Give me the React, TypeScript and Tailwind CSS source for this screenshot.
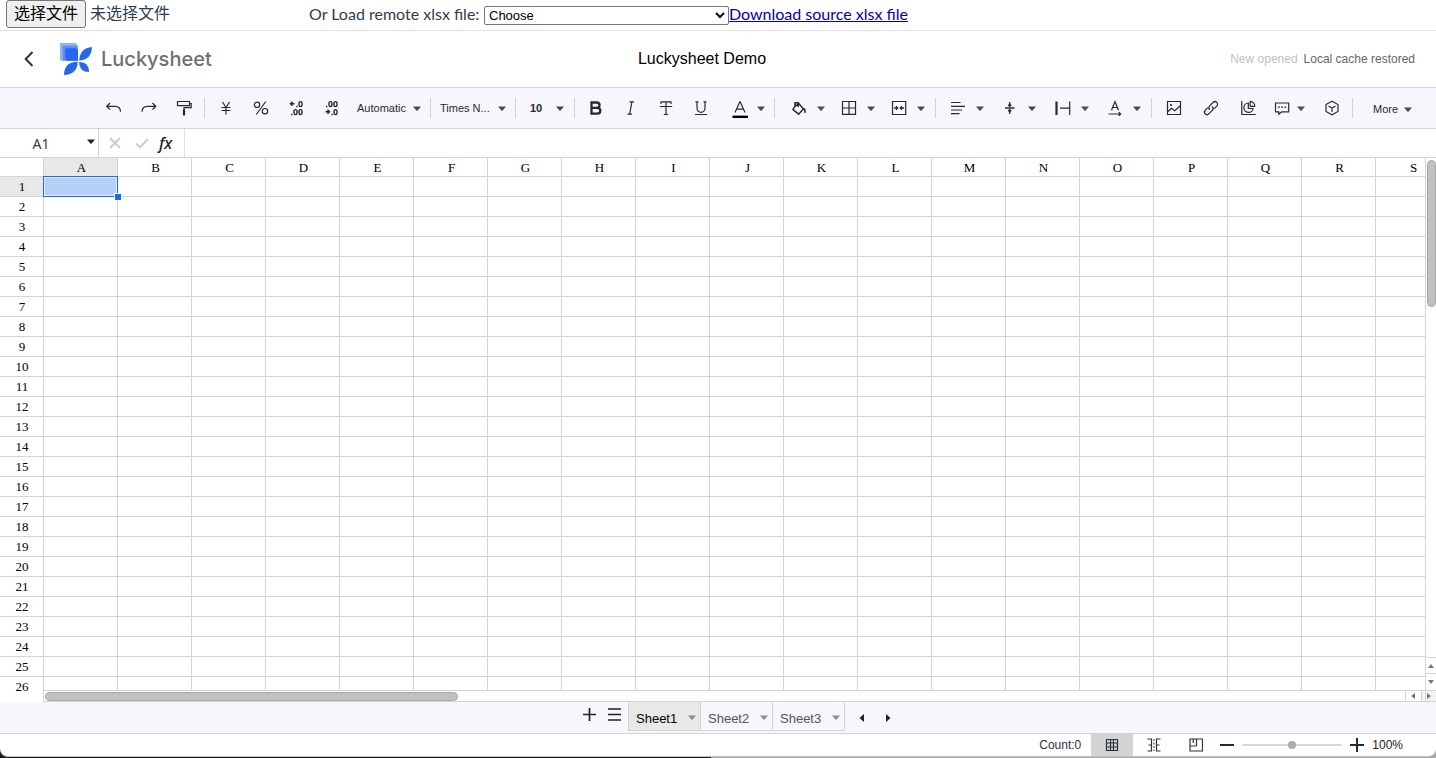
import React, { useState } from "react";

const COLUMNS = "ABCDEFGHIJKLMNOPQRS".split("");
const ROWS = Array.from({ length: 26 }, (_, i) => i + 1);

function Icon({ children }: { children: React.ReactNode }) {
  return (
    <svg
      viewBox="0 0 20 20"
      className="h-5 w-5 shrink-0"
      fill="none"
      stroke="currentColor"
      strokeWidth="1.2"
      aria-hidden="true"
    >
      {children}
    </svg>
  );
}

function Caret({ className = "" }: { className?: string }) {
  return (
    <svg viewBox="0 0 8 5" className={`h-[5px] w-2 shrink-0 ${className}`} fill="currentColor" aria-hidden="true">
      <path d="M0 .5h8L4.6 4.4a.8.8 0 0 1-1.2 0z" />
    </svg>
  );
}

function Tool({ label, className = "w-[35px]", children }: { label: string; className?: string; children: React.ReactNode }) {
  return (
    <button type="button" aria-label={label} className={`flex h-8 shrink-0 items-center justify-center ${className}`}>
      {children}
    </button>
  );
}

function MenuTool({ label, className = "w-[50px]", children }: { label: string; className?: string; children: React.ReactNode }) {
  return (
    <button type="button" aria-label={label} className={`flex h-8 shrink-0 items-center gap-2 pl-[11px] ${className}`}>
      <Icon>{children}</Icon>
      <Caret className="mt-px text-[#4a4a4f]" />
    </button>
  );
}

function Divider({ className = "mx-[3px]" }: { className?: string }) {
  return <span className={`h-5 w-px shrink-0 bg-[#d4d4d8] ${className}`} />;
}

function TopBar() {
  return (
    <div className="flex h-[31px] shrink-0 items-start border-b border-[#e0e0e0] pl-[6px] text-[16px] leading-7 text-[#2c3e50]">
      <div className="flex w-[303px] shrink-0 items-center gap-1">
        <label
          htmlFor="file"
          className="h-7 rounded-[3px] border border-[#767676] bg-[#efefef] px-[7px] leading-[26px] text-black"
        >
          选择文件
        </label>
        <input id="file" type="file" className="sr-only" />
        <span>未选择文件</span>
      </div>
      <label htmlFor="remote" className="w-[175px] shrink-0 font-[Lato,sans-serif] whitespace-nowrap">
        Or Load remote xlsx file:
      </label>
      <span className="relative mt-[6px] h-[19px] w-[245px] shrink-0">
        <select
          id="remote"
          className="block h-[19px] w-full appearance-none rounded-[2px] border border-[#767676] bg-white pl-1 text-[13px] leading-4 text-black"
        >
          <option>Choose</option>
        </select>
        <svg
          viewBox="0 0 10 7"
          className="pointer-events-none absolute top-[6px] right-1 h-[7px] w-[10px]"
          fill="none"
          stroke="#000"
          strokeWidth="2"
          aria-hidden="true"
        >
          <path d="M1 1l4 4 4-4" />
        </svg>
      </span>
      <a href="#download" className="shrink-0 font-[Lato,sans-serif] text-[#0000cc] underline">
        Download source xlsx file
      </a>
    </div>
  );
}

function Header() {
  return (
    <header className="grid h-[57px] shrink-0 grid-cols-[1fr_auto_1fr] items-center border-b border-[#d4d4d4] px-5">
      <div className="flex items-center">
        <button type="button" aria-label="Back" className="flex h-8 w-5 items-center justify-start pl-1 text-[#333]">
          <svg viewBox="0 0 10 16" className="h-4 w-[10px]" fill="none" stroke="currentColor" strokeWidth="2" aria-hidden="true">
            <path d="M8.500 1L1.700 8l6.800 7" />
          </svg>
        </button>
        <svg viewBox="0 0 32 32" className="ml-5 h-8 w-8" aria-hidden="true">
          <path d="M0 0h15.500l2 2v15.500H0z" fill="#8fb3f4" />
          <path d="M2.700 2.700h15v15h-15z" fill="#5c8df5" />
          <path d="M5.200 5.200H15q3 0 3 3v9.600H8.200q-3 0-3-3z" fill="#2468f2" />
          <path d="M32 4q-.2 6.400-3.600 9.900-3.300 3.300-9.200 3.700.2-5.900 3.300-9.400Q25.600 4.500 32 4z" fill="#2468f2" />
          <path d="M4 32q0-6.300 3.300-9.700 3.300-3.400 10.300-3.600 0 6.200-3.300 9.600Q10.800 31.800 4 32z" fill="#2468f2" />
          <path d="M29 29q-4.900 0-7.400-2.500-2.400-2.500-2.600-7.500 5.200.1 7.600 2.500Q29 24 29 29z" fill="#2468f2" />
        </svg>
        <span className="ml-[9px] font-[Inter,sans-serif] text-[20px] font-medium text-[#6b7078]">Luckysheet</span>
      </div>
      <h1 className="mr-8 text-[16px] text-black">Luckysheet Demo</h1>
      <div className="flex justify-end gap-[6px] pr-px text-[12px]">
        <span className="text-[#bfbfbf]">New opened</span>
        <span className="text-[#666]">Local cache restored</span>
      </div>
    </header>
  );
}

function Toolbar() {
  return (
    <div
      role="toolbar"
      className="flex h-[41px] shrink-0 items-center overflow-hidden border-b border-[#d4d4d4] bg-[#f6f6fc] pl-24 text-[11px] text-[#262a33]"
    >
      <Tool label="Undo">
        <Icon>
          <path d="M6 5L2.700 8.300 6 11.500M2.700 8.300H11c3.500 0 5.500 2 5.500 5.500" />
        </Icon>
      </Tool>
      <Tool label="Redo">
        <Icon>
          <path d="M13.500 5l3.300 3.300-3.300 3.200M16.800 8.300H8.500C5 8.300 3 10.300 3 13.800" />
        </Icon>
      </Tool>
      <Tool label="Paint format">
        <Icon>
          <path d="M3.500 3.500h12v4.200h-12zM15.500 5.500h1.700v4.200H10v3.700" />
          <path d="M10 11.500v6" strokeWidth="2.200" />
        </Icon>
      </Tool>
      <Divider />
      <Tool label="Currency format">
        <Icon>
          <path d="M6.500 4l3.500 5.500L13.500 4M10 9.500v7M5.500 9.500h9M5.500 12.500h9" />
        </Icon>
      </Tool>
      <Tool label="Percentage format">
        <Icon>
          <circle cx="6" cy="6.800" r="2.700" />
          <circle cx="14" cy="13.200" r="2.700" />
          <path d="M14.800 3.500L5.300 16.500" />
        </Icon>
      </Tool>
      <Tool label="Decrease decimals">
        <Icon>
          <path d="M4.500 5.800h4M6.500 3.800l-2 2 2 2" strokeWidth="1.400" />
          <rect x="13" y="3.600" width="3" height="5" rx="1.500" strokeWidth="1.400" />
          <rect x="8" y="11.600" width="3" height="5" rx="1.500" strokeWidth="1.400" />
          <rect x="13" y="11.600" width="3" height="5" rx="1.500" strokeWidth="1.400" />
          <path d="M10.300 8.500h1.400M5 16.500h1.400" strokeWidth="1.500" />
        </Icon>
      </Tool>
      <Tool label="Increase decimals">
        <Icon>
          <path d="M4.500 13.800h4M6.500 11.800l2 2-2 2" strokeWidth="1.400" />
          <rect x="13" y="11.600" width="3" height="5" rx="1.500" strokeWidth="1.400" />
          <rect x="8" y="3.600" width="3" height="5" rx="1.500" strokeWidth="1.400" />
          <rect x="13" y="3.600" width="3" height="5" rx="1.500" strokeWidth="1.400" />
          <path d="M10.300 16.500h1.400M5 8.500h1.400" strokeWidth="1.500" />
        </Icon>
      </Tool>
      <button type="button" className="flex h-8 w-[79px] shrink-0 items-center justify-between pr-[6px] pl-[9px]">
        Automatic
        <Caret className="mt-px text-[#4a4a4f]" />
      </button>
      <Divider />
      <button type="button" className="flex h-8 w-[78px] shrink-0 items-center justify-between pr-[6px] pl-[6px]">
        Times N...
        <Caret className="mt-px text-[#4a4a4f]" />
      </button>
      <Divider />
      <button type="button" className="flex h-8 w-[52px] shrink-0 items-center justify-between pr-[7px] pl-[11px] font-bold">
        10
        <Caret className="mt-px text-[#4a4a4f]" />
      </button>
      <Divider />
      <Tool label="Bold">
        <Icon>
          <path d="M5.500 4.500h5.300a2.700 2.700 0 0 1 0 5.400H5.500zM5.500 9.900h5.900a2.900 2.900 0 0 1 0 5.800H5.500z" strokeWidth="2.300" />
        </Icon>
      </Tool>
      <Tool label="Italic">
        <Icon>
          <path d="M8.500 3.800h4.500M6.500 16.200H11M10.900 3.800L8.700 16.200" />
        </Icon>
      </Tool>
      <Tool label="Strikethrough">
        <Icon>
          <path d="M5 6V3.800h10V6M10 3.800v12.700M7.800 16.500h4.400M3.800 8.500h12.400" />
        </Icon>
      </Tool>
      <Tool label="Underline">
        <Icon>
          <path d="M4.500 3.800h3M12.500 3.800h3M6 3.800v6.500a4 4 0 0 0 8 0V3.800M4 16.500h12" />
        </Icon>
      </Tool>
      <MenuTool label="Text color" className="w-[53px]">
        <path d="M6 14.500L10.800 3.800h.4L16 14.500M7.500 11.200h7" />
        <path d="M3.500 18.800H19" stroke="#000" strokeWidth="2.400" />
      </MenuTool>
      <Divider />
      <MenuTool label="Cell color">
        <path d="M5.600 8.700L9.800 5.500l4.600 5.500-4.800 5.200L4 11.600zM6 8.500V4.700h3.200V9" strokeWidth="1.500" />
        <path d="M14.600 10.500q2 1 1.300 4.300" strokeWidth="1.500" />
        <path d="M2.500 19.300h15" stroke="#fff" strokeWidth="1.400" />
      </MenuTool>
      <MenuTool label="Border">
        <path d="M3.500 3.500h13v12.800h-13zM10 3.500v12.800M3.500 10h13" />
      </MenuTool>
      <MenuTool label="Merge cells">
        <path d="M3.500 3.500h13.200v13H3.500z" />
        <path d="M5 10h3.500M15 10h-3.500M7 8.300L8.700 10 7 11.700M13 8.300L11.300 10l1.700 1.700" strokeWidth="1.300" />
      </MenuTool>
      <Divider className="mr-px ml-[7px]" />
      <MenuTool label="Horizontal align" className="w-[52px]">
        <path d="M3 4.500h9.500M3 8.300h14M3 12h11M3 15.700h8.500" />
      </MenuTool>
      <MenuTool label="Vertical align" className="w-[53px]">
        <path d="M5 10h9.500M9.700 4v4.500M8.200 6.800l1.500 1.500 1.500-1.500M9.700 16v-4.500M8.200 13.200l1.500-1.500 1.500 1.500" strokeWidth="1.400" />
      </MenuTool>
      <MenuTool label="Text wrap" className="w-[52px]">
        <path d="M3.500 3.500v13.500" strokeWidth="2.200" />
        <path d="M16.700 3.500v13.500M7 10.200h9.500" />
      </MenuTool>
      <MenuTool label="Text rotate" className="w-[52px]">
        <path d="M6.500 12.300L10 3.500l3.500 8.800M7.700 9.500h4.700M3.500 16h12M13.700 14.200l2 1.800-2 1.800" />
      </MenuTool>
      <Divider className="mr-[3px] ml-[5px]" />
      <Tool label="Insert image" className="w-[37px]">
        <Icon>
          <path d="M3.500 3.500h13v13h-13zM4 13.500l3.500-3.200 3.300 2.500 5.500-5" />
          <circle cx="7" cy="7" r=".5" />
        </Icon>
      </Tool>
      <Tool label="Insert link" className="w-[37px]">
        <Icon>
          <path d="M8.800 11.900a3 3 0 0 1-.1-4.100l3.300-3.300a2.500 2.500 0 0 1 3.900 3.300l-2.600 2.800M11.200 8.300a3 3 0 0 1 .1 4.100L8 15.700a2.500 2.500 0 0 1-3.900-3.300l2.600-2.800" />
        </Icon>
      </Tool>
      <Tool label="Insert chart" className="w-[37px]">
        <Icon>
          <path d="M3.800 3v13.500h14" />
          <path d="M10.300 5a4.700 4.700 0 1 0 4.900 5.500h-4.900zM12.200 3.400a4.600 4.600 0 0 1 4.500 4.900h-4.500z" />
        </Icon>
      </Tool>
      <button type="button" aria-label="Comment" className="flex h-8 w-12 shrink-0 items-center gap-[5px] pl-[6px]">
        <Icon>
          <path d="M3.500 5h13.200v8.800h-7l-2.900 2.500v-2.500H3.500z" />
          <path d="M6 9.200h1.800M9.200 9.200H11M12.400 9.200h1.800" />
        </Icon>
        <Caret className="mt-px text-[#4a4a4f]" />
      </button>
      <Tool label="Pivot table">
        <Icon>
          <path d="M10 3.200l6 3.400v6.800l-6 3.400-6-3.400V6.600zM6.500 8l3.500 2 3.500-2M10 10v4" />
        </Icon>
      </Tool>
      <Divider />
      <button type="button" className="flex h-8 shrink-0 items-center gap-[6px] pt-[2px] pl-[17px]">
        More
        <Caret className="text-[#4a4a4f]" />
      </button>
    </div>
  );
}

function FormulaBar() {
  return (
    <div className="flex h-[29px] shrink-0 items-stretch border-b border-[#d4d4d4]">
      <div className="flex w-[99px] items-center border-r border-[#d4d4d4] pr-[3px]">
        <input
          aria-label="Name box"
          defaultValue="A1"
          className="w-[82px] min-w-0 bg-transparent text-center font-['Noto_Sans',sans-serif] text-[14px] text-[#2c3e50] outline-none"
        />
        <Caret className="mb-[3px] ml-auto text-[#222]" />
      </div>
      <div className="flex w-[86px] shrink-0 items-center border-r border-[#e0e0e0] pl-[10px]">
        <button type="button" aria-label="Cancel" className="w-[26px] text-[#cccccc]">
          <svg viewBox="0 0 12 12" className="h-3 w-3" fill="none" stroke="currentColor" strokeWidth="2" aria-hidden="true">
            <path d="M1 1l10 10M11 1L1 11" />
          </svg>
        </button>
        <button type="button" aria-label="Confirm" className="w-[24px] text-[#cccccc]">
          <svg viewBox="0 0 14 12" className="h-3 w-[14px]" fill="none" stroke="currentColor" strokeWidth="2" aria-hidden="true">
            <path d="M1 6.500L5 10.300 13 2" />
          </svg>
        </button>
        <button type="button" className="font-['Noto_Sans',sans-serif] text-[16px] font-medium text-[#222] italic">
          fx
        </button>
      </div>
      <input aria-label="Formula" className="min-w-0 flex-1 px-2 text-[13px] outline-none" />
    </div>
  );
}

function Grid() {
  return (
    <div className="flex min-h-0 flex-1">
      <div className="relative min-w-0 flex-1 overflow-hidden border-r border-[#d4d4d4]">
        <table className="w-max table-fixed border-separate border-spacing-0 font-['Liberation_Serif',serif] text-[13px] leading-[19px] text-black">
          <thead>
            <tr className="h-[19px]">
              <td className="h-[19px] w-11 min-w-11 border-r border-b border-[#d4d4d4] p-0" />
              {COLUMNS.map((c) => (
                <th
                  key={c}
                  scope="col"
                  className={`h-[19px] w-[74px] min-w-[74px] border-r border-b border-[#d4d4d4] p-0 pt-px pl-[2px] leading-[17px] font-normal ${
                    c === "A" ? "bg-[#e8e8e8]" : ""
                  }`}
                >
                  {c}
                </th>
              ))}
            </tr>
          </thead>
          <tbody>
            {ROWS.map((r) => (
              <tr key={r} className="h-5">
                <th
                  scope="row"
                  className={`h-5 border-r border-b border-r-[#d4d4d4] p-0 pl-px font-normal ${r === 1 ? "bg-[#e8e8e8]" : ""} ${
                    r === ROWS.length ? "border-b-transparent" : "border-b-[#d4d4d4]"
                  }`}
                >
                  {r}
                </th>
                {COLUMNS.map((c) => (
                  <td key={c} className="h-5 border-r border-b border-[#d4d4d4] p-0">
                    {r === 1 && c === "A" && (
                      <div className="relative h-[19px]">
                        <span className="absolute -top-px -right-px -bottom-px -left-px z-10 border border-[#0f6fec] bg-[#b5cff5] shadow-[inset_0_0_0_1px_#e4eefc]">
                          <span className="absolute -right-1 -bottom-1 h-[6px] w-[6px] bg-[#0f6fec] shadow-[0_0_0_1px_#fff]" />
                        </span>
                      </div>
                    )}
                  </td>
                ))}
              </tr>
            ))}
          </tbody>
        </table>
        <div className="absolute right-0 bottom-0 left-[43px] z-20 flex h-3 items-stretch border-t border-b border-l border-[#d4d4d4] bg-white">
          <div className="flex-1 pt-px pl-px">
            <div className="h-[9px] w-[30.4%] rounded-full border border-[#a8a8a8] bg-[#c1c1c1]" />
          </div>
          <button type="button" aria-label="Scroll left" className="flex w-4 items-center justify-center border-l border-[#d4d4d4] pr-px text-[#777]">
            <svg viewBox="0 0 4 6" className="h-[6px] w-1" fill="currentColor" aria-hidden="true">
              <path d="M4 0v6L0 3z" />
            </svg>
          </button>
          <span className="w-1 border-l border-[#d4d4d4] bg-[#f3f3f3]" />
        </div>
      </div>
      <div className="flex w-[10px] shrink-0 flex-col">
        <div className="flex-1 pt-[2px] pl-px">
          <div className="h-[147px] w-[9px] rounded-full border border-[#a8a8a8] bg-[#c1c1c1]" />
        </div>
        <button type="button" aria-label="Scroll up" className="flex h-4 items-center justify-center border-t border-[#d4d4d4] text-[#777]">
          <svg viewBox="0 0 6 4" className="h-1 w-[6px]" fill="currentColor" aria-hidden="true">
            <path d="M0 4h6L3 0z" />
          </svg>
        </button>
        <button type="button" aria-label="Scroll down" className="flex h-[17px] items-center justify-center border-t border-[#d4d4d4] text-[#777]">
          <svg viewBox="0 0 6 4" className="h-1 w-[6px]" fill="currentColor" aria-hidden="true">
            <path d="M0 0h6L3 4z" />
          </svg>
        </button>
        <button type="button" aria-label="Scroll right" className="flex h-3 items-center justify-start border-t border-b border-[#d4d4d4] bg-[#f3f3f3] pl-px text-[#777]">
          <svg viewBox="0 0 4 6" className="h-[6px] w-1" fill="currentColor" aria-hidden="true">
            <path d="M0 0v6l4-3z" />
          </svg>
        </button>
      </div>
    </div>
  );
}

function SheetTabs() {
  const [active, setActive] = useState("Sheet1");
  return (
    <div className="flex h-8 shrink-0 items-start border-b border-[#d4d4d4] bg-[#f6f6fc] pl-[577px] text-[#222]">
      <button type="button" aria-label="Add sheet" className="flex h-[25px] w-[25px] items-center justify-center">
        <svg viewBox="0 0 13 13" className="h-[13px] w-[13px]" fill="none" stroke="currentColor" strokeWidth="1.700" aria-hidden="true">
          <path d="M6.500 0v13M0 6.500h13" />
        </svg>
      </button>
      <button type="button" aria-label="Sheet list" className="flex h-[25px] w-[26px] items-center pl-[6px]">
        <svg viewBox="0 0 13 13" className="h-[13px] w-[13px]" fill="none" stroke="currentColor" strokeWidth="1.600" aria-hidden="true">
          <path d="M0 1h13M0 6.500h13M0 12h13" />
        </svg>
      </button>
      <div className="flex h-[29px] border-l border-[#d4d4d4]">
        {["Sheet1", "Sheet2", "Sheet3"].map((name) => (
          <button
            key={name}
            type="button"
            onClick={() => setActive(name)}
            className={`flex w-[72px] items-center justify-between border-r border-b border-[#d4d4d4] pt-[5px] pr-1 pl-[7px] text-[13px] ${
              active === name ? "bg-[#e8e8e8] text-black" : "text-[#555]"
            }`}
          >
            {name}
            <Caret className="mb-[2px] text-[#8e8e8e]" />
          </button>
        ))}
      </div>
      <button type="button" aria-label="Previous sheets" className="ml-[3px] flex h-[31px] w-[26px] items-center justify-center">
        <svg viewBox="0 0 5 8" className="h-2 w-[5px]" fill="currentColor" aria-hidden="true">
          <path d="M5 0v8L.5 4z" />
        </svg>
      </button>
      <button type="button" aria-label="Next sheets" className="flex h-[31px] w-[28px] items-center justify-center">
        <svg viewBox="0 0 5 8" className="h-2 w-[5px]" fill="currentColor" aria-hidden="true">
          <path d="M0 0v8l4.500-4z" />
        </svg>
      </button>
    </div>
  );
}

function StatusBar() {
  return (
    <footer className="flex h-[22px] shrink-0 items-center justify-end pr-[33px] text-[12px] text-[#2c3340]">
      <span className="mr-[10px]">Count:0</span>
      <button type="button" aria-label="Normal view" className="flex h-full w-[42px] items-center justify-center bg-[#d3d3d3]">
        <svg viewBox="0 0 14 14" className="h-[14px] w-[14px]" fill="none" stroke="currentColor" aria-hidden="true">
          <path d="M1 1.500h12M1 5h12M1 9h12M1 12.500h12M1.500 1v12M5.500 1v12M8.500 1v12M12.500 1v12" strokeWidth="1.200" />
        </svg>
      </button>
      <button type="button" aria-label="Page layout view" className="flex h-full w-[42px] items-center justify-center">
        <svg viewBox="0 0 14 14" className="h-[14px] w-[14px]" fill="none" stroke="currentColor" aria-hidden="true">
          <path d="M.5 1h4v12h-4M13.500 1h-4v12h4M1.500 7h3M9.500 7h3" strokeWidth="1.200" />
          <path d="M7 1v12" strokeDasharray="2 1.500" strokeWidth="1" />
        </svg>
      </button>
      <button type="button" aria-label="Page break view" className="flex h-full w-[42px] items-center justify-center">
        <svg viewBox="0 0 14 14" className="h-[14px] w-[14px]" fill="none" stroke="currentColor" aria-hidden="true">
          <path d="M1 1h12.500v12H1zM7.500 1v7M1 8h6.500M4.300 1v4" strokeWidth="1.200" />
        </svg>
      </button>
      <button type="button" aria-label="Zoom out" className="ml-[3px] flex w-[14px] items-center justify-center">
        <span className="h-[2px] w-[14px] bg-[#222a38]" />
      </button>
      <input
        type="range"
        aria-label="Zoom"
        min={0}
        max={100}
        defaultValue={50}
        className="mx-2 h-2 w-[100px] appearance-none bg-[linear-gradient(#d5dad8,#d5dad8)] bg-[length:100%_2px] bg-center bg-no-repeat [&::-webkit-slider-thumb]:h-2 [&::-webkit-slider-thumb]:w-2 [&::-webkit-slider-thumb]:appearance-none [&::-webkit-slider-thumb]:rounded-full [&::-webkit-slider-thumb]:bg-[#a3b0ab]"
      />
      <button type="button" aria-label="Zoom in" className="flex w-[14px] items-center justify-center">
        <svg viewBox="0 0 14 14" className="h-[14px] w-[14px]" fill="none" stroke="#222a38" strokeWidth="2" aria-hidden="true">
          <path d="M7 0v14M0 7h14" />
        </svg>
      </button>
      <span className="ml-2 text-[#222]">100%</span>
    </footer>
  );
}

export default function App() {
  return (
    <div className="h-screen bg-[linear-gradient(to_right,#1c1c1c_49.5%,#a6a6a6_49.5%)] pb-px font-['Liberation_Sans','Noto_Sans_CJK_SC',sans-serif]">
      <div className="flex h-full flex-col overflow-hidden rounded-b-[8px] border-b border-[#c4c4c4] bg-white">
        <TopBar />
        <Header />
        <Toolbar />
        <FormulaBar />
        <Grid />
        <SheetTabs />
        <StatusBar />
      </div>
    </div>
  );
}
